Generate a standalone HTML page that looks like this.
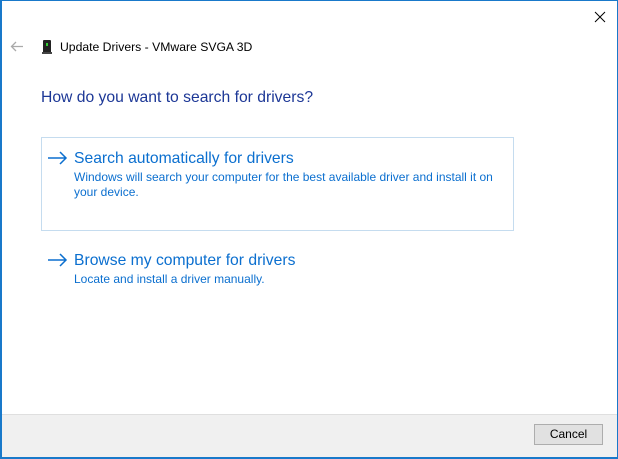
<!DOCTYPE html>
<html><head><style>
body{margin:0;width:618px;height:459px;background:#fff;position:relative;overflow:hidden;font-family:"Liberation Sans",sans-serif}
.frame{position:absolute;left:0;top:0;border:1px solid #1979ca;border-left-width:2px;border-bottom-width:3px;box-sizing:border-box;width:618px;height:459px}
.t{position:absolute;white-space:nowrap}
.foot{position:absolute;left:2px;right:1px;top:414px;height:42px;background:#f0f0f0;border-top:1px solid #dfdfdf}
.btn{position:absolute;left:534px;top:424px;width:69px;height:21px;box-sizing:border-box;background:#e1e1e1;border:1px solid #adadad;font-size:12px;text-align:center;line-height:19px;color:#000}
.link{color:#0b6fcf;font-size:15.7px}
.sub{color:#0b6fcf;font-size:12px}
</style></head><body>
<div class="frame"></div>
<svg class="t" style="left:594px;top:11px" width="12" height="12"><path d="M1 1L11 11M11 1L1 11" stroke="#000" stroke-width="1"/></svg>
<svg class="t" style="left:10px;top:41px" width="14" height="11"><path d="M13 5.5H2M6 1L1.5 5.5L6 10" stroke="#aaa" stroke-width="1.3" fill="none"/></svg>
<div class="t" style="left:43px;top:40px;width:8px;height:13px;background:#222;border-radius:1px"></div>
<div class="t" style="left:46px;top:43px;width:2px;height:3px;background:#3c3"></div>
<div class="t" style="left:42px;top:52px;width:10px;height:2px;background:#444"></div>
<div class="t" style="left:60px;top:40px;font-size:12.2px;color:#000">Update Drivers - VMware SVGA 3D</div>
<div class="t" style="left:41px;top:89px;font-size:15.7px;color:#1c3796">How do you want to search for drivers?</div>
<div class="t" style="left:41px;top:137px;width:473px;height:94px;box-sizing:border-box;border:1px solid #c5dcef"></div>
<svg class="t" style="left:48px;top:151px" width="20" height="14"><path d="M0 7H18M12 1L18 7L12 13" stroke="#0b6fcf" stroke-width="1.5" fill="none"/></svg>
<div class="t link" style="left:74px;top:150px">Search automatically for drivers</div>
<div class="t sub" style="left:74px;top:170px;line-height:15px">Windows will search your computer for the best available driver and install it on<br>your device.</div>
<svg class="t" style="left:48px;top:253px" width="20" height="14"><path d="M0 7H18M12 1L18 7L12 13" stroke="#0b6fcf" stroke-width="1.5" fill="none"/></svg>
<div class="t link" style="left:74px;top:252px">Browse my computer for drivers</div>
<div class="t sub" style="left:74px;top:272px">Locate and install a driver manually.</div>
<div class="foot"></div>
<div class="btn">Cancel</div>
</body></html>
